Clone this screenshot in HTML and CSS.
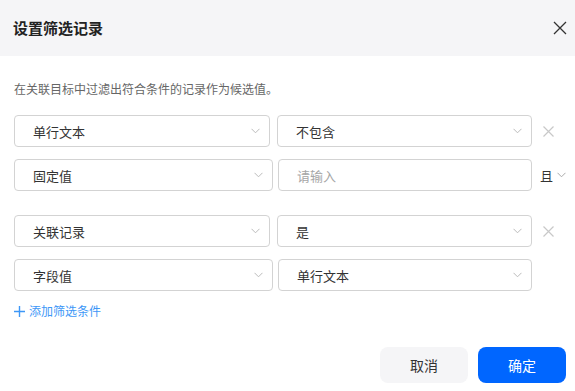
FILE: index.html
```html
<!DOCTYPE html>
<html lang="zh">
<head>
<meta charset="utf-8">
<link rel="stylesheet" href="styles.css">
</head>
<body>
<div class="dialog">
  <div class="header">
    <div class="title">设置筛选记录</div>
    <svg class="close" width="14" height="14" viewBox="0 0 14 14"><path d="M1 1L13 13M13 1L1 13" stroke="#333" stroke-width="1.3" fill="none"/></svg>
  </div>
  <div class="body">
    <div class="desc">在关联目标中过滤出符合条件的记录作为候选值。</div>
    <div class="group">
      <div class="row">
        <div class="field w1">单行文本<svg class="chev" width="9" height="6" viewBox="0 0 9 6"><path d="M0.5 0.8L4.5 4.8L8.5 0.8" stroke="#bbb" fill="none"/></svg></div>
        <div class="field w2 g1">不包含<svg class="chev" width="9" height="6" viewBox="0 0 9 6"><path d="M0.5 0.8L4.5 4.8L8.5 0.8" stroke="#bbb" fill="none"/></svg></div>
        <svg class="del" width="11" height="11" viewBox="0 0 11 11"><path d="M0.5 0.5L10.5 10.5M10.5 0.5L0.5 10.5" stroke="#c8c8c8" stroke-width="1.2" fill="none"/></svg>
      </div>
      <div class="row">
        <div class="field w3">固定值<svg class="chev" width="9" height="6" viewBox="0 0 9 6"><path d="M0.5 0.8L4.5 4.8L8.5 0.8" stroke="#bbb" fill="none"/></svg></div>
        <div class="field w4 g2 ph">请输入</div>
        <div class="conj">且<svg width="9" height="6" viewBox="0 0 9 6"><path d="M0.5 0.8L4.5 4.8L8.5 0.8" stroke="#aaa" fill="none"/></svg></div>
      </div>
    </div>
    <div class="group">
      <div class="row">
        <div class="field w1">关联记录<svg class="chev" width="9" height="6" viewBox="0 0 9 6"><path d="M0.5 0.8L4.5 4.8L8.5 0.8" stroke="#bbb" fill="none"/></svg></div>
        <div class="field w2 g1">是<svg class="chev" width="9" height="6" viewBox="0 0 9 6"><path d="M0.5 0.8L4.5 4.8L8.5 0.8" stroke="#bbb" fill="none"/></svg></div>
        <svg class="del" width="11" height="11" viewBox="0 0 11 11"><path d="M0.5 0.5L10.5 10.5M10.5 0.5L0.5 10.5" stroke="#c8c8c8" stroke-width="1.2" fill="none"/></svg>
      </div>
      <div class="row">
        <div class="field w3">字段值<svg class="chev" width="9" height="6" viewBox="0 0 9 6"><path d="M0.5 0.8L4.5 4.8L8.5 0.8" stroke="#bbb" fill="none"/></svg></div>
        <div class="field w4 g2">单行文本<svg class="chev" width="9" height="6" viewBox="0 0 9 6"><path d="M0.5 0.8L4.5 4.8L8.5 0.8" stroke="#bbb" fill="none"/></svg></div>
      </div>
    </div>
    <div class="add"><svg width="11" height="11" viewBox="0 0 11 11"><path d="M5.5 0V11M0 5.5H11" stroke="#3d97f7" stroke-width="1.4" fill="none"/></svg>添加筛选条件</div>
  </div>
  <div class="footer">
    <div class="btn cancel">取消</div>
    <div class="btn ok">确定</div>
  </div>
</div>
</body>
</html>
```
FILE: styles.css
```css
* { box-sizing: border-box; }
html, body { margin: 0; padding: 0; background: #fff; }
body {
  font-family: "Noto Sans CJK SC", "Noto Sans", sans-serif;
  width: 575px;
  height: 391px;
  overflow: hidden;
}
.dialog { width: 575px; height: 391px; display: flex; flex-direction: column; }
.header {
  height: 56px;
  background: #f5f5f7;
  display: flex;
  align-items: center;
  justify-content: space-between;
  padding: 0 8px 0 13px;
}
.title { font-size: 15px; font-weight: 700; color: #222; line-height: 20px; }
.close { display: block; }
.body { padding: 24px 0 0 14px; }
.desc { font-size: 12px; line-height: 18px; color: #666; height: 18px; }
.group { margin-top: 17px; display: flex; flex-direction: column; gap: 12px; }
.group + .group { margin-top: 24px; }
.row { display: flex; align-items: center; height: 32px; }
.field {
  height: 32px;
  border: 1px solid #d3d3d3;
  border-radius: 4px;
  display: flex;
  align-items: center;
  justify-content: space-between;
  padding: 0 9px 0 18px;
  font-size: 13px;
  color: #333;
}
.field.ph { color: #a6a6a6; }
.w1 { width: 256px; }
.w2 { width: 255px; }
.w3 { width: 259px; }
.w4 { width: 254px; }
.g1 { margin-left: 7px; }
.g2 { margin-left: 5px; }
.chev { display: block; }
.del { margin-left: 11px; display: block; }
.conj {
  margin-left: 8px;
  display: flex;
  align-items: center;
  gap: 4px;
  font-size: 13px;
  color: #333;
}
.add {
  margin-top: 12px;
  display: flex;
  align-items: center;
  gap: 4px;
  font-size: 12px;
  line-height: 16px;
  color: #3d97f7;
}
.footer {
  margin-top: auto;
  display: flex;
  justify-content: flex-end;
  gap: 10px;
  padding: 0 9px 8px 0;
}
.btn {
  width: 88px;
  height: 36px;
  border-radius: 8px;
  display: flex;
  align-items: center;
  justify-content: center;
  font-size: 14px;
}
.cancel { background: #f5f5f7; color: #333; }
.ok { background: #0066ff; color: #fff; }
```
